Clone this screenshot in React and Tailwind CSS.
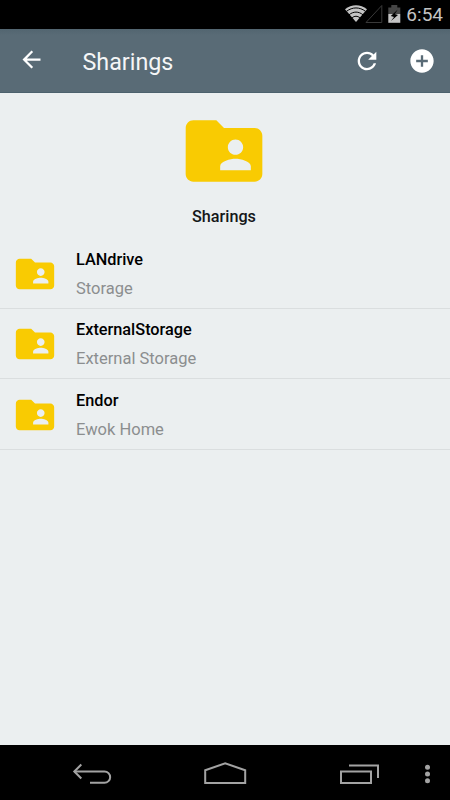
import React from 'react';

const sharings = [
    { id: 1, name: 'LANdrive', description: 'Storage' },
    { id: 2, name: 'ExternalStorage', description: 'External Storage' },
    { id: 3, name: 'Endor', description: 'Ewok Home' },
];

const FolderShared = ({ className }) => (
    <svg viewBox="0 0 24 24" fill="currentColor" className={className}>
        <path d="M20 6h-8l-2-2H4c-1.1 0-1.99.9-1.99 2L2 18c0 1.1.9 2 2 2h16c1.1 0 2-.9 2-2V8c0-1.1-.9-2-2-2zm-5 3c1.1 0 2 .9 2 2s-.9 2-2 2-2-.9-2-2 .9-2 2-2zm4 8h-8v-1c0-1.33 2.67-2 4-2s4 .67 4 2v1z" />
    </svg>
);

const StatusBar = () => (
    <div className="h-[29px] shrink-0 bg-black flex items-start justify-end pr-[7px]">
        <svg width="58" height="29" viewBox="0 0 58 29" fill="none" className="mr-[4px]">
            <path d="M12 22L1 9.200C7.500 4 16.500 4 23 9.200z" fill="#c4c4c4" />
            <g stroke="#000" strokeWidth="1">
                <path d="M2.500 11.300C8.500 6.800 15.500 6.800 21.500 11.300" />
                <path d="M5 14.800C9.500 11.200 14.500 11.200 19 14.800" />
                <path d="M7.800 18C10.500 15.700 13.500 15.700 16.200 18" />
            </g>
            <path d="M37.800 5.500v17H22z" stroke="#393939" />
            <path d="M44.300 7.500h3V5h6v2.500h3v6.500h-12z" fill="#454545" />
            <path d="M44.300 14h12v8.800h-12z" fill="#c4c4c4" />
            <path d="M53.800 9.500l-7 6.600 3.200.8-3 4.200 7-6.200-3.200-.8z" fill="#000" />
        </svg>
        <span className="text-[19px] leading-[30px] text-[#c4c4c4]">6:54</span>
    </div>
);

const Header = () => (
    <header className="h-16 shrink-0 bg-gradient-to-b from-[#526570] via-[#596b76] via-10% to-[#596b76] border-b border-[#4c616d] flex items-center pl-[18px] pr-[14px] text-white">
        <svg viewBox="0 0 24 24" fill="currentColor" className="size-[27px] mb-[2px]">
            <path d="M20 11H7.83l5.59-5.59L12 4l-8 8 8 8 1.41-1.41L7.83 13H20v-2z" />
        </svg>
        <h1 className="ml-[37.500px] mt-[3px] text-[23.300px] leading-7 flex-1 text-[#f5f6f7]">Sharings</h1>
        <svg viewBox="0 0 24 24" fill="currentColor" className="size-[28px] mr-[27px]">
            <path d="M17.65 6.35C16.2 4.9 14.21 4 12 4c-4.42 0-7.99 3.58-7.99 8s3.57 8 7.99 8c3.73 0 6.84-2.55 7.73-6h-2.08c-.82 2.33-3.04 4-5.65 4-3.31 0-6-2.69-6-6s2.69-6 6-6c1.66 0 3.14.69 4.22 1.78L13 11h7V4l-2.35 2.35z" />
        </svg>
        <svg viewBox="0 0 24 24" fill="currentColor" className="size-[28px]">
            <path d="M12 2C6.48 2 2 6.48 2 12s4.48 10 10 10 10-4.48 10-10S17.52 2 12 2zm5 11h-4v4h-2v-4H7v-2h4V7h2v4h4v2z" />
        </svg>
    </header>
);

const NavBar = () => (
    <nav className="h-[55px] shrink-0 bg-black">
        <svg width="450" height="55" viewBox="0 0 450 55" fill="none" stroke="#a3a3a3" strokeWidth="2">
            <path d="M74 26.500h30.500a5.600 5.600 0 0 1 0 11.300H90" />
            <path d="M81.300 19.500L74.300 26.500l7 7" />
            <path d="M205.200 38V25.300L225.200 18.300l20 7V38z" />
            <path d="M341 26.500h30V38h-30z" />
            <path d="M349 20.500h29V33" />
            <g fill="#a3a3a3" stroke="none">
                <circle cx="427.500" cy="22.300" r="2.500" />
                <circle cx="427.500" cy="29" r="2.500" />
                <circle cx="427.500" cy="35.700" r="2.500" />
            </g>
        </svg>
    </nav>
);

const App = () => {
    return (
        <div className="w-[450px] h-[800px] flex flex-col overflow-hidden bg-[#ebeff0] font-[Roboto,sans-serif]">
            <StatusBar />
            <Header />
            <main className="flex-1 min-h-0">
                <div className="h-[145.600px] pt-[12px] flex flex-col items-center pr-[2px]">
                    <FolderShared className="size-[92px] text-[#f9cb02]" />
                    <h2 className="mt-[9.500px] text-[16.200px] leading-5 font-medium text-[#151719]">Sharings</h2>
                </div>
                <ul>
                    {sharings.map((item) => (
                        <li key={item.id} className="h-[70.400px] border-b border-[#dadedf] flex items-center pl-[11.500px]">
                            <FolderShared className="size-[46px] mt-[1.500px] text-[#f9cb02]" />
                            <div className="ml-[18.500px] pt-px">
                                <p className="text-[16.300px] leading-[29px] font-medium text-black">{item.name}</p>
                                <p className="text-[16.500px] leading-[29px] text-[#8b8e8f]">{item.description}</p>
                            </div>
                        </li>
                    ))}
                </ul>
            </main>
            <NavBar />
        </div>
    );
};

export default App;
